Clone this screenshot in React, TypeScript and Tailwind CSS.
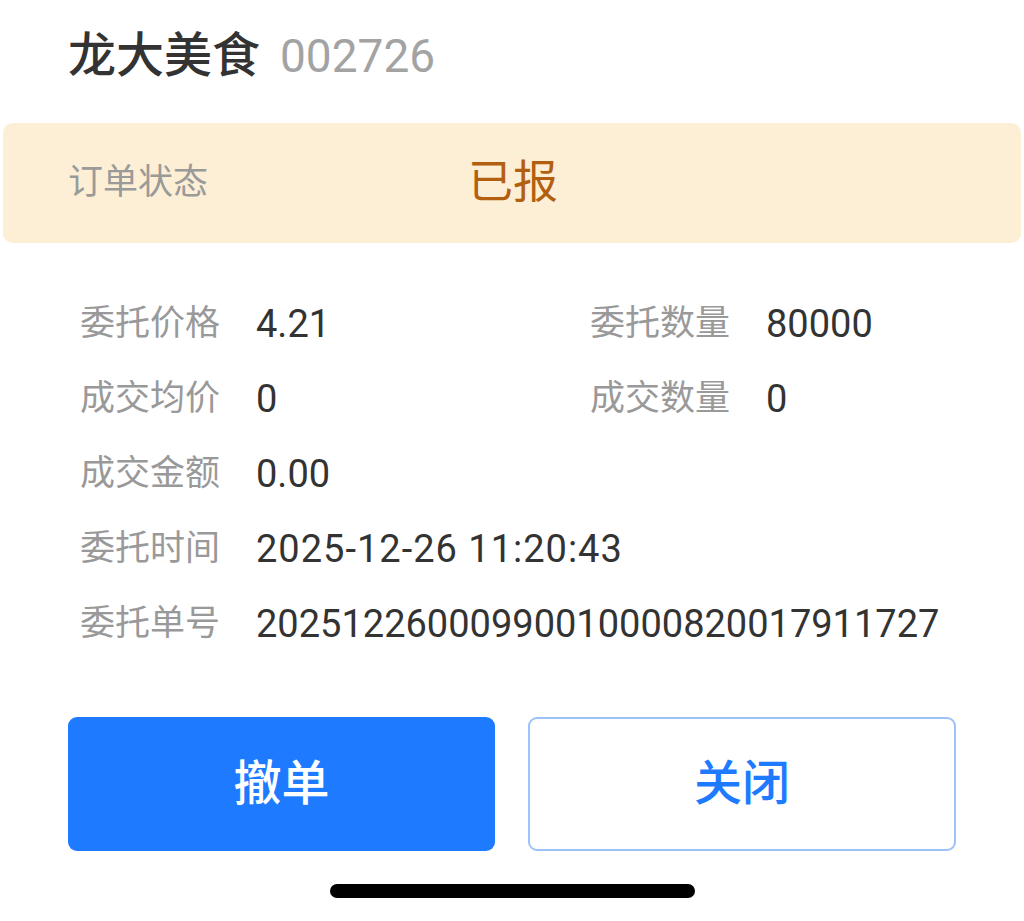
import React from 'react';

const cjk = { fontFamily: 'Roboto, "Noto Sans CJK SC", sans-serif' };

const Field: React.FC<{ label: string; value: string; wide?: boolean }> = ({ label, value, wide }) => (
  <div className="flex items-center h-[75px]">
    <span className="w-[176px] shrink-0 text-[35px] text-[#999999]">{label}</span>
    <span className={`text-[38px] text-[#333333] ${wide ? 'tracking-[1px]' : ''}`}>{value}</span>
  </div>
);

export default function App() {
  return (
    <div className="w-[1024px] h-[921px] bg-white overflow-hidden" style={cjk}>
      {/* Header */}
      <div className="h-[112px] flex items-center pl-[68px] gap-[20px]">
        <span className="text-[48px] font-medium text-[#333333]">龙大美食</span>
        <span className="text-[46px] text-[#a3a3a3]">002726</span>
      </div>

      {/* Status */}
      <div className="mt-[11px] mx-[3px] h-[120px] rounded-[10px] bg-[#fdefd5] flex items-center pl-[65px]">
        <span className="w-[400px] text-[35px] text-[#9a9a9a]">订单状态</span>
        <span className="text-[45px] text-[#b35f10]">已报</span>
      </div>

      {/* Details */}
      <div className="mt-[44px] pl-[80px]">
        <div className="grid grid-cols-[510px_1fr]">
          <Field label="委托价格" value="4.21" />
          <Field label="委托数量" value="80000" />
          <Field label="成交均价" value="0" />
          <Field label="成交数量" value="0" />
        </div>
        <Field label="成交金额" value="0.00" />
        <Field label="委托时间" value="2025-12-26 11:20:43" wide />
        <Field label="委托单号" value="20251226000990010000820017911727" />
      </div>

      {/* Actions */}
      <div className="mt-[55px] flex gap-[33px] pl-[68px] pr-[68px]">
        <button className="w-[427px] h-[134px] rounded-[9px] bg-[#1e7bff] text-white text-[48px] font-medium">
          撤单
        </button>
        <button className="w-[428px] h-[134px] rounded-[9px] border-2 border-[#9cc2f7] bg-white text-[#1e7bff] text-[48px] font-medium">
          关闭
        </button>
      </div>

      {/* Home indicator */}
      <div className="mt-[33px] flex justify-center">
        <div className="w-[365px] h-[14px] rounded-full bg-black" />
      </div>
    </div>
  );
}
